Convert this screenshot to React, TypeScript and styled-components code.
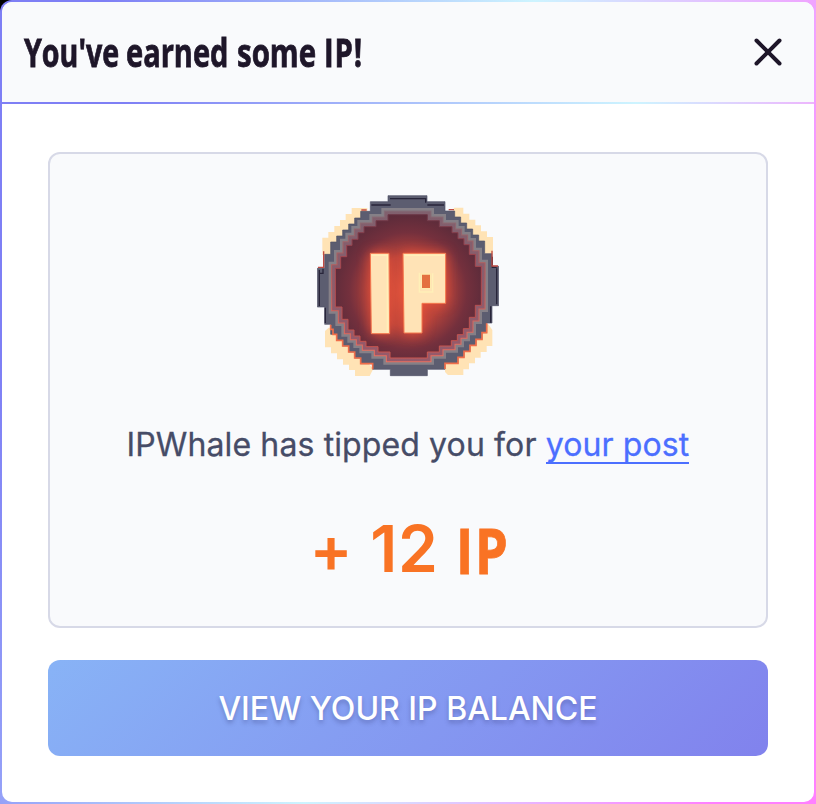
import React from 'react';
import styled, { createGlobalStyle } from 'styled-components';

const Global = createGlobalStyle`
  * { box-sizing: border-box; }
  body { margin: 0; background: linear-gradient(90deg, #000 50%, #ff80ff 50%); }
`;

const Frame = styled.main`
  width: 816px;
  height: 804px;
  padding: 2px;
  border-radius: 12px 0 0 0;
  background: linear-gradient(106deg, #7e7ff5 0%, #7e7ff5 10%, #cdf4ff 51%, #ff80ff 90%);
`;

const Dialog = styled.section`
  height: 800px;
  border-radius: 10px;
  overflow: hidden;
  background: #fff;
`;

const Header = styled.header`
  height: 102px;
  display: flex;
  align-items: center;
  justify-content: space-between;
  padding: 0 28px 0 22px;
  background: #f9fafc;
  border-bottom: 2px solid;
  border-image: linear-gradient(90deg, #7e7ff5 0%, #7e7ff5 15%, #cdf4ff 78%, #edb5fd 100%) 1;
`;

const Title = styled.h1`
  margin: 0 0 1px;
  display: flex;
  color: #1e1629;
  font: 700 39.5px/54px "Open Sans", sans-serif;
  -webkit-text-stroke: 0.8px currentColor;
`;

const Word = styled.span<{ $width: number; $scale: number; $spacing?: number }>`
  width: ${(p) => p.$width}px;
  white-space: nowrap;
  letter-spacing: ${(p) => p.$spacing ?? 0}px;
  transform: scaleX(${(p) => p.$scale});
  transform-origin: left center;
`;

const Close = styled.button`
  width: 36px;
  height: 36px;
  padding: 0;
  border: 0;
  background: none;
  svg { display: block; }
`;

const Content = styled.div`
  padding: 48px 46px;
`;

const Card = styled.div`
  height: 476px;
  border: 2px solid #d7d9e7;
  border-radius: 12px;
  background: #f9fafc;
  display: flex;
  flex-direction: column;
  align-items: center;
  padding-top: 41px;
`;

const Message = styled.p`
  margin: 44px 0 0;
  height: 48px;
  color: #464c67;
  font: 400 32px/48px Inter, sans-serif;
  letter-spacing: 0.12px;
  -webkit-text-stroke: 0.3px currentColor;
  white-space: nowrap;
`;

const PostLink = styled.a`
  color: #4c6fff;
  text-decoration: none;
  background: linear-gradient(#4c6fff, #4c6fff) left bottom / 100% 2px no-repeat;
`;

const Amount = styled.p`
  margin: 40px 0 0;
  display: flex;
  color: #f97324;
  font: 600 64px/80px Inter, sans-serif;
  font-feature-settings: "calt" 0;
  letter-spacing: 0.8px;
  white-space: pre;
`;

const Unit = styled.span`
  width: 51px;
  font: 700 63px/82px "Open Sans", sans-serif;
  letter-spacing: 2px;
  -webkit-text-stroke: 0.8px currentColor;
  transform: scaleX(.83);
  transform-origin: left center;
`;

const Action = styled.button`
  width: 100%;
  height: 96px;
  margin-top: 32px;
  padding: 2px 0 0;
  border: 0;
  border-radius: 12px;
  color: #fff;
  background: linear-gradient(135deg, #88b3f6, #8182ed);
  font: 500 32px/48px Inter, sans-serif;
  text-shadow: 0 3px 4px rgba(55, 60, 120, .35);
`;

const facePath = 'M240 86V104H204V122H168V140H150V160H132V178H116V212H98V247H82V363H102V400H120V432H138V450H156V466H174V482H210V498H246V516H358V498H394V480H430V464H448V446H466V428H484V394H502V358H520V241H502V205H484V176H468V158H450V140H432V122H394V104H358V86Z';

const Coin = () => (
  <svg width="182" height="182" viewBox="27 27 546 546" aria-label="IP coin">
    <defs>
      <radialGradient id="face" gradientUnits="userSpaceOnUse" cx="300" cy="315" r="235">
        <stop offset="0" stopColor="#d8523c" />
        <stop offset=".45" stopColor="#b6433b" />
        <stop offset=".75" stopColor="#74303d" />
        <stop offset="1" stopColor="#5a2b3a" />
      </radialGradient>
      <linearGradient id="bezel" gradientUnits="userSpaceOnUse" x1="0" y1="70" x2="0" y2="540">
        <stop offset="0" stopColor="#806d78" />
        <stop offset=".4" stopColor="#bd5a58" />
        <stop offset="1" stopColor="#ed7260" />
      </linearGradient>
      <linearGradient id="inset" gradientUnits="userSpaceOnUse" x1="0" y1="70" x2="0" y2="540">
        <stop offset="0" stopColor="#80606e" />
        <stop offset="1" stopColor="#98596a" />
      </linearGradient>
      <linearGradient id="seam" gradientUnits="userSpaceOnUse" x1="0" y1="70" x2="0" y2="540">
        <stop offset="0" stopColor="#653647" />
        <stop offset=".3" stopColor="#a4464f" />
        <stop offset="1" stopColor="#cf584f" />
      </linearGradient>
      <filter id="glow" x="-40%" y="-40%" width="180%" height="180%">
        <feGaussianBlur stdDeviation="18" />
      </filter>
    </defs>
    <path fill="#ffe3b5" d="M131 66H178V110L75 207H43V155H61V138H79V120H96V102H113V84H131ZM438 65H466V83H484V101H502V118H519V136H537V153H555V203H520L430 100ZM62 425L51 435V484H69V502H87V520H105V536H123V552H141V570H185L196 548L80 425ZM540 413L553 432V480H536V498H518V515H501V532H483V550H466V567H420L411 558V530Z" />
    <path fill="#5c5d70" stroke="#505267" strokeWidth="2" d="M240 29H357V47H411V75H440V93H458V111H476V129H494V147H512V165H530V203H552V241H572V359H552V411H536V440H522V460H504V478H486V496H468V514H450V532H411V550H358V569H247V550H194V533H158V516H140V498H122V480H104V463H86V445H68V415H50V363H28V247H50V205H68V168H86V150H104V132H122V114H140V96H158V76H187V47H240Z" />
    <path d="M246 38H353V50M190 57H248M358 57H408M34 252V360M52 365V411M45 248V262H36M566 247V355M548 361V410M553 212V244H566" fill="none" stroke="#28253a" strokeWidth="4" />
    <path d="M160 72H176M422 71H438M47 196V244H30M552 194V240H570" fill="none" stroke="#c04b43" strokeWidth="4" />
    <path d="M68 416V430H75V445H86V463H104V480H122V498H140V516H158V533H194V550M536 412V440H522V460H504V478H486V496H468V514H450V532H411V549" fill="none" stroke="#f06e4a" strokeWidth="5" />
    <path d={facePath} fill="none" stroke="#858087" strokeWidth="40" />
    <path d={facePath} fill="none" stroke="url(#bezel)" strokeWidth="25" />
    <path d={facePath} fill="none" stroke="url(#inset)" strokeWidth="19" />
    <path d={facePath} fill="url(#face)" stroke="url(#seam)" strokeWidth="3" />
    <path d="M186 202H243L245 443H190ZM285 202H413V352H342V441H288Z" fill="#ff5638" stroke="#ff5638" strokeWidth="10" opacity=".6" filter="url(#glow)" />
    <path fill="#ffe3b6" stroke="#f5774d" strokeWidth="3" d="M187 202H243L245 443H190ZM285 202H413V352H342V441H288Z" />
    <path fill="#e46f40" stroke="#ffeab0" strokeWidth="4" d="M340 264H368V308H340Z" />
    <path fill="none" stroke="#fff0b8" strokeWidth="4" d="M191 208H238V440M291 208H408M334 260V318H374V262" />
  </svg>
);

export default function App() {
  return (
    <>
      <Global />
      <Frame>
        <Dialog role="dialog">
          <Header>
            <Title>
              <Word $width={102} $scale={0.725}>You've</Word>
              <Word $width={111} $scale={0.735}>earned</Word>
              <Word $width={87} $scale={0.745}>some</Word>
              <Word $width={42} $scale={0.74} $spacing={1.2}>IP!</Word>
            </Title>
            <Close aria-label="Close">
              <svg width="36" height="36" viewBox="0 0 36 36">
                <path d="M6.5 6.5L29.5 29.5M29.5 6.5L6.5 29.5" stroke="#1e1629" strokeWidth="4" strokeLinecap="round" />
              </svg>
            </Close>
          </Header>
          <Content>
            <Card>
              <Coin />
              <Message>IPWhale has tipped you for <PostLink>your post</PostLink></Message>
              <Amount>+ 12 <Unit>IP</Unit></Amount>
            </Card>
            <Action>VIEW YOUR IP BALANCE</Action>
          </Content>
        </Dialog>
      </Frame>
    </>
  );
}
